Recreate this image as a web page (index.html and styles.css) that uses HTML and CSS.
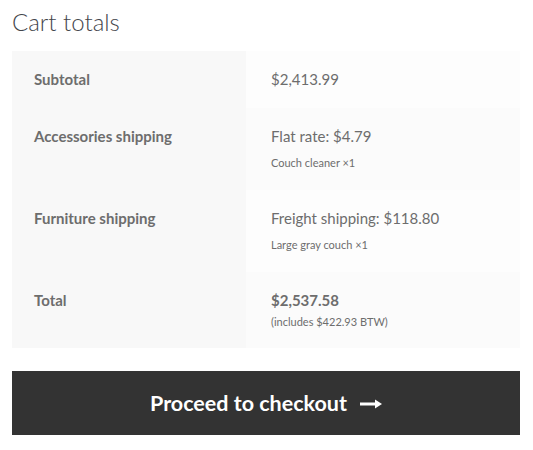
FILE: index.html
```html
<!DOCTYPE html>
<html>
<head>
<meta charset="utf-8">
<link rel="stylesheet" href="styles.css">
</head>
<body>
<div class="cart">
  <h2 class="title">Cart totals</h2>
  <table class="totals">
    <tbody>
      <tr>
        <th>Subtotal</th>
        <td><span class="amt">$2,413.99</span></td>
      </tr>
      <tr>
        <th>Accessories shipping</th>
        <td><span class="amt">Flat rate: $4.79</span><p class="note">Couch cleaner ×1</p></td>
      </tr>
      <tr>
        <th>Furniture shipping</th>
        <td><span class="amt">Freight shipping: $118.80</span><p class="note">Large gray couch ×1</p></td>
      </tr>
      <tr>
        <th>Total</th>
        <td><strong class="amt total">$2,537.58</strong><small class="tax">(includes $422.93 BTW)</small></td>
      </tr>
    </tbody>
  </table>
  <a class="checkout" href="#">Proceed to checkout
    <svg class="arrow" width="22" height="10" viewBox="0 0 22 10"><rect x="0" y="3.5" width="16" height="3" fill="#fff"/><path d="M15 0.5 L22 5 L15 9.5 Z" fill="#fff"/></svg>
  </a>
</div>
</body>
</html>
```
FILE: styles.css
```css
* { box-sizing: border-box; }
html, body { margin: 0; padding: 0; background: #fff; }
body {
  font-family: "Lato", "Liberation Sans", sans-serif;
  color: #6d6d6d;
  font-size: 15px;
  line-height: 1.618;
}
.cart { padding: 0 13px 0 12px; }
.title {
  margin: 0;
  padding-top: 4px;
  font-weight: 300;
  font-size: 24px;
  line-height: 36px;
  color: #43454b;
  height: 51px;
}
.totals {
  width: 100%;
  border-collapse: collapse;
  border-spacing: 0;
}
.totals th {
  width: 234px;
  background: #f8f8f8;
  text-align: left;
  vertical-align: top;
  font-weight: 700;
  padding: 16px 22px;
  line-height: 25px;
}
.totals td {
  background: #fdfdfd;
  vertical-align: top;
  padding: 16px 22px 16px 25px;
  line-height: 25px;
}
.totals tr:nth-child(2n) td { background: #fbfbfb; }
.amt { display: block; }
.total { font-weight: 700; }
.note {
  margin: 0;
  font-size: 11px;
  line-height: 17px;
  padding-top: 5px;
  padding-bottom: 3px;
}
.tax {
  display: block;
  font-size: 11px;
  line-height: 18px;
  padding-bottom: 1px;
}
.checkout {
  display: flex;
  align-items: center;
  justify-content: center;
  gap: 13px;
  margin-top: 23px;
  height: 64px;
  background: #333333;
  color: #fff;
  text-decoration: none;
  font-weight: 700;
  font-size: 21.5px;
}
.arrow { display: block; margin-top: 1px; }
```
